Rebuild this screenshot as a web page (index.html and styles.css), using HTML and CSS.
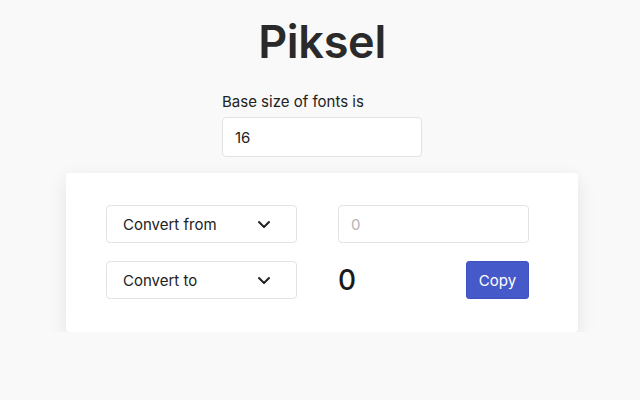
FILE: index.html
```html
<!DOCTYPE html>
<html>
<head>
<meta charset="utf-8">
<link rel="stylesheet" href="styles.css">
</head>
<body>
<div class="page">
  <h1 class="title">Piksel</h1>
  <div class="base">
    <label class="base-label">Base size of fonts is</label>
    <div class="field base-input">16</div>
  </div>
  <div class="card">
    <div class="grid">
      <div class="select">
        <span>Convert from</span>
        <svg class="chev" width="14" height="9" viewBox="0 0 14 9"><path d="M2 2l5 5 5-5" fill="none" stroke="#222" stroke-width="2" stroke-linecap="round" stroke-linejoin="round"/></svg>
      </div>
      <div class="field placeholder">0</div>
      <div class="select">
        <span>Convert to</span>
        <svg class="chev" width="14" height="9" viewBox="0 0 14 9"><path d="M2 2l5 5 5-5" fill="none" stroke="#222" stroke-width="2" stroke-linecap="round" stroke-linejoin="round"/></svg>
      </div>
      <div class="result-row">
        <span class="result">0</span>
        <button class="copy">Copy</button>
      </div>
    </div>
  </div>
</div>
</body>
</html>
```
FILE: styles.css
```css
html, body {
  margin: 0;
  padding: 0;
  background: #f9f9f9;
  font-family: Inter, "Noto Sans", sans-serif;
  color: #222;
}
.page {
  display: flex;
  flex-direction: column;
  align-items: center;
  padding-left: 4px;
}
.title {
  margin: 15px 0 0 0;
  font-size: 45px;
  font-weight: 600;
  line-height: 54px;
  color: #2a2a2a;
  letter-spacing: -0.3px;
}
.base {
  margin-top: 24px;
  width: 200px;
  display: flex;
  flex-direction: column;
  gap: 6px;
}
.base-label {
  font-size: 15px;
  line-height: 18px;
  color: #222;
}
.field {
  box-sizing: border-box;
  height: 38px;
  border: 1px solid #e3e3e3;
  border-radius: 4px;
  background: #fff;
  display: flex;
  align-items: center;
  padding-left: 12px;
  font-size: 15px;
}
.base-input {
  height: 40px;
  color: #222;
}
.placeholder {
  color: #b5b5b5;
}
.card {
  margin-top: 16px;
  width: 512px;
  box-sizing: border-box;
  background: #fff;
  border-radius: 4px;
  box-shadow: 0 6px 20px rgba(0,0,0,0.09);
  padding: 32px 49px 33px 40px;
}
.grid {
  display: grid;
  grid-template-columns: 191px 191px;
  column-gap: 41px;
  row-gap: 18px;
}
.select {
  box-sizing: border-box;
  height: 38px;
  border: 1px solid #e3e3e3;
  border-radius: 4px;
  background: #fff;
  display: flex;
  align-items: center;
  justify-content: space-between;
  padding: 0 25px 0 16px;
  font-size: 15px;
  color: #222;
}
.chev {
  display: block;
}
.result-row {
  display: flex;
  align-items: center;
  justify-content: space-between;
  height: 38px;
}
.result {
  font-size: 28px;
  font-weight: 500;
  color: #1a1a1a;
}
.copy {
  height: 38px;
  width: 63px;
  border: 1px solid #3f53c0;
  border-radius: 3px;
  background: #4659c9;
  color: #fff;
  font-family: Inter, "Noto Sans", sans-serif;
  font-size: 15px;
  padding: 0;
}
```
